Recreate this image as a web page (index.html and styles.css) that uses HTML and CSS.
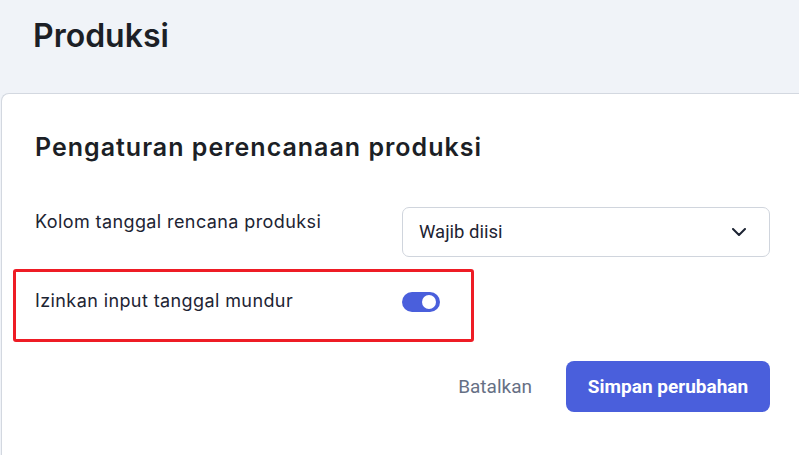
FILE: index.html
```html
<!DOCTYPE html>
<html lang="id">
<head>
<meta charset="utf-8">
<title>Produksi</title>
<link rel="stylesheet" href="styles.css">
</head>
<body>
<header class="page-header">
  <h1 class="page-title">Produksi</h1>
</header>
<main class="card">
  <h2 class="card-title">Pengaturan perencanaan produksi</h2>
  <div class="setting-row">
    <label class="setting-label">Kolom tanggal rencana produksi</label>
    <div class="select">
      <span class="select-value">Wajib diisi</span>
      <svg class="chevron" width="14" height="8" viewBox="0 0 14 8" fill="none"><path d="M1 1l6 6 6-6" stroke="#1d2433" stroke-width="2" stroke-linecap="round" stroke-linejoin="round"/></svg>
    </div>
  </div>
  <div class="setting-row highlight">
    <label class="setting-label">Izinkan input tanggal mundur</label>
    <span class="toggle"><span class="toggle-knob"></span></span>
  </div>
  <div class="actions">
    <button class="btn-cancel">Batalkan</button>
    <button class="btn-primary">Simpan perubahan</button>
  </div>
</main>
</body>
</html>
```
FILE: styles.css
```css
html, body {
  margin: 0;
  padding: 0;
}
body {
  background: #f0f3f8;
  font-family: Inter, "Noto Sans", sans-serif;
  color: #1d2433;
  overflow: hidden;
  height: 455px;
}
.page-header {
  padding: 17px 33px 38px;
}
.page-title {
  margin: 0;
  font-size: 32px;
  line-height: 38px;
  font-weight: 600;
  color: #1c1f26;
}
.card {
  margin-left: 1px;
  background: #fff;
  border: 1px solid #d3d8e0;
  border-right: none;
  border-bottom: none;
  border-top-left-radius: 8px;
  padding: 37px 0 0 33px;
  height: 362px;
  box-sizing: border-box;
}
.card-title {
  margin: 0 0 44px;
  font-size: 25px;
  line-height: 32px;
  font-weight: 600;
  letter-spacing: 1px;
  color: #1c1f26;
}
.setting-row {
  display: flex;
  align-items: flex-start;
  width: 735px;
}
.setting-label {
  width: 367px;
  flex: none;
  font-size: 18px;
  letter-spacing: 0.4px;
  line-height: 28px;
  padding-top: 1px;
  color: #1d2433;
}
.select {
  width: 368px;
  height: 50px;
  box-sizing: border-box;
  border: 1px solid #d0d5dd;
  border-radius: 7px;
  display: flex;
  align-items: center;
  justify-content: space-between;
  padding: 0 23px 0 16px;
  font-family: Roboto, "Liberation Sans", sans-serif;
  font-size: 18.5px;
  color: #1d2433;
}
.highlight {
  margin: 12px 0 0 -22px;
  width: 461px;
  box-sizing: border-box;
  border: 3px solid #ee1c25;
  border-radius: 3px;
  padding: 14px 0 24px 19px;
  height: 73px;
}
.toggle {
  margin-top: 6px;
  width: 38px;
  height: 20px;
  border-radius: 10px;
  background: #4a5fdc;
  position: relative;
  flex: none;
}
.toggle-knob {
  position: absolute;
  right: 4px;
  top: 3px;
  width: 14px;
  height: 14px;
  border-radius: 50%;
  background: #fff;
}
.actions {
  width: 735px;
  display: flex;
  justify-content: flex-end;
  align-items: center;
  gap: 22px;
  margin-top: 19px;
}
.btn-cancel {
  background: none;
  border: none;
  padding: 0 12px;
  font-family: Roboto, "Liberation Sans", sans-serif;
  font-size: 19px;
  color: #667085;
  cursor: pointer;
}
.btn-primary {
  width: 204px;
  height: 51px;
  border: none;
  border-radius: 8px;
  background: #4a5fdc;
  color: #fff;
  font-family: Roboto, "Liberation Sans", sans-serif;
  font-size: 19px;
  font-weight: 700;
  cursor: pointer;
}
```
